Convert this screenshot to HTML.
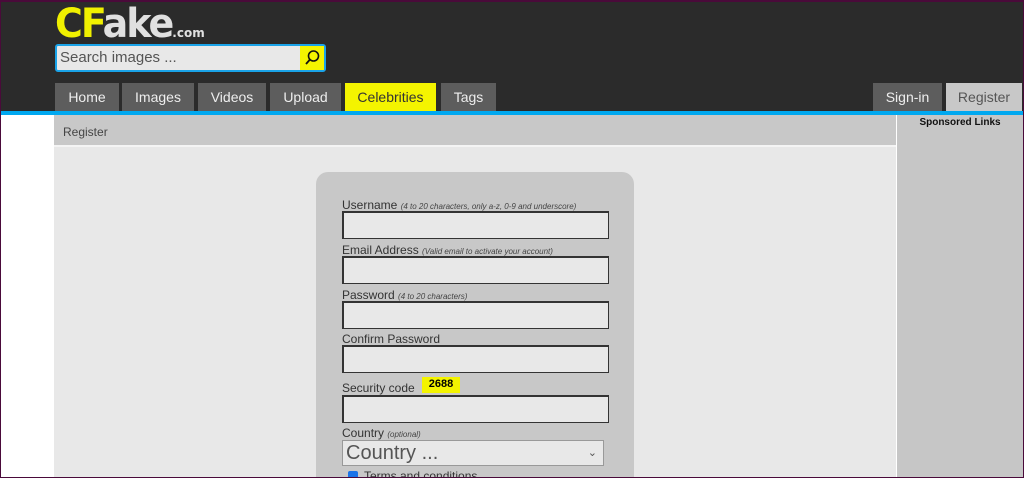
<!DOCTYPE html><html style="overflow:hidden;height:478px"><head><style>
body{margin:0;width:1024px;height:478px;overflow:hidden;font-family:"Liberation Sans",sans-serif;background:#fff;position:relative}
.frame{position:absolute;left:0;top:0;width:1024px;height:478px;border:1px solid #4a0a3a;border-top:2px solid #4a0a3a;box-sizing:border-box;pointer-events:none;z-index:9}
.hdr{position:absolute;left:0;top:0;width:1024px;height:111px;background:#2b2b2b}
.blue{position:absolute;left:0;top:111px;width:1024px;height:4px;background:#00a8f0}
.logo{position:absolute;left:55px;top:0px;font-family:"DejaVu Sans",sans-serif;font-weight:900;font-size:38px;letter-spacing:-2px;transform:scaleY(1.05);transform-origin:top left}
.search{position:absolute;left:55px;top:44px;width:264px;height:24px;border:2px solid #1aa3e8;border-radius:3px;background:#e8e8e8;font-size:15px;color:#555;line-height:24px;padding-left:3px;box-sizing:content-box}
.sbtn{position:absolute;right:0;top:0;width:24px;height:24px;background:#f4f400}
.tab{position:absolute;top:83px;height:28px;background:#5d5d5d;color:#eee;font-size:14px;line-height:29px;text-align:center}
.crumb{position:absolute;left:54px;top:115px;width:842px;height:30px;background:#c8c8c8;font-size:12px;color:#444;line-height:34px;text-indent:9px;border-bottom:2px solid #f4f4f4}
.main{position:absolute;left:54px;top:147px;width:842px;height:331px;background:#e8e8e8}
.side{position:absolute;left:897px;top:115px;width:126px;height:363px;background:#c6c6c6;font-size:10px;font-weight:bold;text-align:center;padding-top:2px;box-sizing:border-box;color:#111}
.clip{position:absolute;left:0;top:0;width:1024px;height:478px;overflow:hidden}
.panel{position:absolute;left:316px;top:172px;width:318px;height:320px;background:#c8c8c8;border-radius:12px}
.lbl{position:absolute;left:342px;font-size:12px;color:#333;white-space:nowrap}
.lbl i{font-size:8px;color:#444}
.inp{position:absolute;left:342px;width:264px;height:25px;border:1px solid #333;border-width:2px 1px 1px 2px;background:#e8e8e8}
</style></head><body><div class="clip">
<div class="hdr"></div><div class="blue"></div>
<div class="logo"><span style="color:#f0f000">CF</span><span style="color:#e0e0e0">ake</span><span style="color:#e0e0e0;font-size:12px;font-weight:bold;letter-spacing:0">.com</span></div>
<div class="search">Search images ...<div class="sbtn"><svg width="24" height="24" viewBox="0 0 24 24"><circle cx="13.5" cy="10" r="5" fill="none" stroke="#111" stroke-width="1.6"/><path d="M10 13.5L6 18" stroke="#111" stroke-width="1.8"/></svg></div></div>
<div class="tab" style="left:55px;width:64px">Home</div>
<div class="tab" style="left:122px;width:72px">Images</div>
<div class="tab" style="left:198px;width:68px">Videos</div>
<div class="tab" style="left:270px;width:71px">Upload</div>
<div class="tab" style="left:345px;width:91px;background:#f4f400;color:#333">Celebrities</div>
<div class="tab" style="left:441px;width:55px">Tags</div>
<div class="tab" style="left:873px;width:69px">Sign-in</div>
<div class="tab" style="left:946px;width:76px;background:#c8c8c8;color:#555">Register</div>
<div class="crumb">Register</div>
<div class="main"></div>
<div class="side">Sponsored Links</div>
<div class="panel"></div>
<div class="lbl" style="top:198px">Username <i>(4 to 20 characters, only a-z, 0-9 and underscore)</i></div>
<div class="inp" style="top:211px"></div>
<div class="lbl" style="top:243px">Email Address <i>(Valid email to activate your account)</i></div>
<div class="inp" style="top:256px"></div>
<div class="lbl" style="top:288px">Password <i>(4 to 20 characters)</i></div>
<div class="inp" style="top:301px"></div>
<div class="lbl" style="top:332px">Confirm Password</div>
<div class="inp" style="top:345px"></div>
<div class="lbl" style="top:381px">Security code</div>
<div style="position:absolute;left:422px;top:377px;width:38px;height:16px;background:#f4f400;font-size:11px;font-weight:bold;text-align:center;line-height:15px">2688</div>
<div class="inp" style="top:395px"></div>
<div class="lbl" style="top:426px">Country <i>(optional)</i></div>
<div style="position:absolute;left:342px;top:440px;width:257px;height:24px;border:1px solid #999;background:#e8e8e8;font-size:20px;color:#555;line-height:24px;padding-left:3px">Country ...<span style="position:absolute;right:6px;top:0;font-size:11px">&#8964;</span></div>
<div style="position:absolute;left:348px;top:471px;width:10px;height:10px;background:#1a73e8;border-radius:2px"></div>
<div class="lbl" style="left:364px;top:469px">Terms and conditions</div>
<div class="frame"></div>
</div></body></html>
